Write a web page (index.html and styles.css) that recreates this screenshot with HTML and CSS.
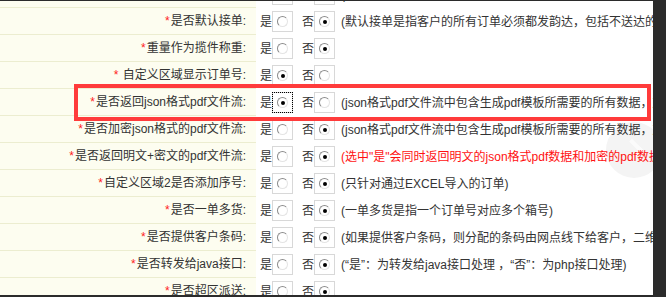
FILE: index.html
```html
<!DOCTYPE html>
<html lang="zh-CN">
<head>
  <meta charset="UTF-8">
  <title>接口设置</title>
  <link rel="stylesheet" href="styles.css">
</head>
<body>
  <div class="frame">
    <!-- faded back-to-top button, sits behind the rows -->
    <div class="totop"></div>

    <div class="list">
      <div class="row">
        <div class="label"></div>
        <div class="opts">
          <span class="yn">是</span><span class="radio"><i></i></span>
          <span class="yn">否</span><span class="radio on"><i></i></span>
          <span class="desc">(如何是指国内中的所有客户一起打印一整张是的所有一个改是的</span>
        </div>
      </div>
      <div class="row">
        <div class="label"><span class="req">*</span>是否默认接单:</div>
        <div class="opts">
          <span class="yn">是</span><span class="radio"><i></i></span>
          <span class="yn">否</span><span class="radio on"><i></i></span>
          <span class="desc">(默认接单是指客户的所有订单必须都发韵达，包括不送达的订单也要发韵达</span>
        </div>
      </div>
      <div class="row">
        <div class="label"><span class="req">*</span>重量作为揽件称重:</div>
        <div class="opts">
          <span class="yn">是</span><span class="radio"><i></i></span>
          <span class="yn">否</span><span class="radio on"><i></i></span>
        </div>
      </div>
      <div class="row">
        <div class="label"><span class="req">*</span> 自定义区域显示订单号:</div>
        <div class="opts">
          <span class="yn">是</span><span class="radio on"><i></i></span>
          <span class="yn">否</span><span class="radio"><i></i></span>
        </div>
      </div>
      <div class="row">
        <div class="label"><span class="req">*</span>是否返回json格式pdf文件流:</div>
        <div class="opts">
          <span class="yn">是</span><span class="radio on focus"><i></i></span>
          <span class="yn">否</span><span class="radio"><i></i></span>
          <span class="desc">(json格式pdf文件流中包含生成pdf模板所需要的所有数据，加密后返回</span>
        </div>
      </div>
      <div class="row">
        <div class="label"><span class="req">*</span>是否加密json格式的pdf文件流:</div>
        <div class="opts">
          <span class="yn">是</span><span class="radio"><i></i></span>
          <span class="yn">否</span><span class="radio on"><i></i></span>
          <span class="desc">(json格式pdf文件流中包含生成pdf模板所需要的所有数据，加密后返回</span>
        </div>
      </div>
      <div class="row">
        <div class="label"><span class="req">*</span>是否返回明文+密文的pdf文件流:</div>
        <div class="opts">
          <span class="yn">是</span><span class="radio"><i></i></span>
          <span class="yn">否</span><span class="radio on"><i></i></span>
          <span class="desc warn">(选中"是"会同时返回明文的json格式pdf数据和加密的pdf数据)</span>
        </div>
      </div>
      <div class="row">
        <div class="label"><span class="req">*</span>自定义区域2是否添加序号:</div>
        <div class="opts">
          <span class="yn">是</span><span class="radio"><i></i></span>
          <span class="yn">否</span><span class="radio on"><i></i></span>
          <span class="desc">(只针对通过EXCEL导入的订单)</span>
        </div>
      </div>
      <div class="row">
        <div class="label"><span class="req">*</span>是否一单多货:</div>
        <div class="opts">
          <span class="yn">是</span><span class="radio"><i></i></span>
          <span class="yn">否</span><span class="radio on"><i></i></span>
          <span class="desc">(一单多货是指一个订单号对应多个箱号)</span>
        </div>
      </div>
      <div class="row">
        <div class="label"><span class="req">*</span>是否提供客户条码:</div>
        <div class="opts">
          <span class="yn">是</span><span class="radio"><i></i></span>
          <span class="yn">否</span><span class="radio on"><i></i></span>
          <span class="desc">(如果提供客户条码，则分配的条码由网点线下给客户，二维码由系统生成)</span>
        </div>
      </div>
      <div class="row">
        <div class="label"><span class="req">*</span>是否转发给java接口:</div>
        <div class="opts">
          <span class="yn">是</span><span class="radio"><i></i></span>
          <span class="yn">否</span><span class="radio on"><i></i></span>
          <span class="desc">(“是”：为转发给java接口处理 ，“否”：为php接口处理)</span>
        </div>
      </div>
      <div class="row">
        <div class="label"><span class="req">*</span>是否超区派送:</div>
        <div class="opts">
          <span class="yn">是</span><span class="radio"><i></i></span>
          <span class="yn">否</span><span class="radio on"><i></i></span>
        </div>
      </div>
    </div>

    <!-- annotation box -->
    <div class="mark"></div>
  </div>
</body>
</html>
```

FILE: styles.css
```css
html, body {margin:0; padding:0; height:297px; overflow:hidden; background:#2b2b2b;}
body {font-family:"Liberation Sans","Noto Sans CJK SC",sans-serif; font-size:12px; color:#333;}
.frame {position:relative; width:653px; height:294px; margin-top:1px; background:#fff; overflow:hidden;}
.list {position:relative; margin-top:-21px;}
.row {display:flex; height:27px;}
.label {flex:0 0 256px; box-sizing:border-box; padding-right:10px; border-top:1px solid #ecedd0; background:#fdfdf0; text-align:right; line-height:26px; white-space:nowrap;}
.req {color:#f22; margin-right:1px;}
.opts {flex:1; min-width:0; display:flex; align-items:center; padding-left:4px; white-space:nowrap; overflow:hidden;}
.yn {flex:none;}
.radio {flex:none; width:19px; height:19px; margin-top:2px; border:1px solid #d8d8d8; display:flex; align-items:center; justify-content:center;}
.radio + .yn {margin-left:9px;}
.radio i {width:9px; height:9px; border-radius:50%; border:1.5px solid; border-color:#8c8c8c #e4e4e4 #e4e4e4 #8c8c8c; background:#fff; display:flex; align-items:center; justify-content:center;}
.radio.on i::after {content:""; width:4px; height:4px; border-radius:50%; background:#000;}
.radio.focus {outline:1px dotted #000; outline-offset:-1px;}
.desc {margin-left:6px;}
.desc.warn {color:#f11;}
/* annotation box */
.mark {position:absolute; left:74px; top:83px; width:569px; height:29px; border:4px solid #ff3b3b;}
/* faded back-to-top button */
.totop {position:absolute; left:606px; top:121px; width:56px; height:56px; border-radius:50%; background:#f4f4f4;}
.totop::after {content:""; position:absolute; left:18px; top:20px; width:12px; height:12px; border-top:4px solid #fbfbfb; border-right:4px solid #fbfbfb; transform:rotate(45deg);}
```
